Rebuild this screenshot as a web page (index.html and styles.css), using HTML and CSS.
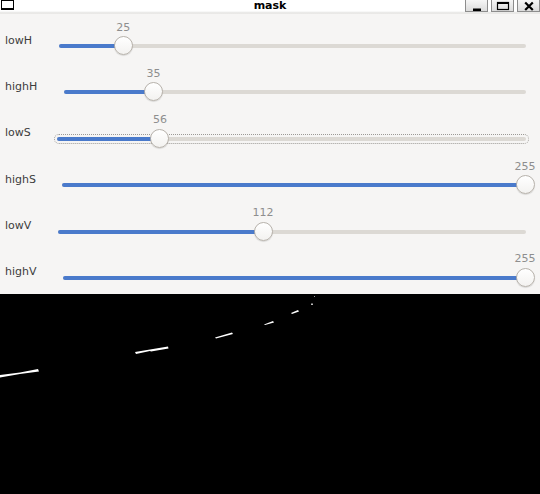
FILE: index.html
```html
<!DOCTYPE html>
<html lang="en">
<head>
  <meta charset="UTF-8">
  <title>mask</title>
  <link rel="stylesheet" href="styles.css">
</head>
<body>

<div class="window">
  <div class="titlebar">
    <span class="app-icon"></span>
    <span class="title">mask</span>
    <div class="controls">
      <span class="ctl-btn">
        <svg width="10" height="10" viewBox="0 0 10 10"><rect x="1" y="7.5" width="8" height="2.5" fill="#000"/></svg>
      </span>
      <span class="ctl-btn">
        <svg width="14" height="10" viewBox="0 0 14 10"><rect x="1.5" y="1.5" width="11" height="7" fill="none" stroke="#000" stroke-width="1.2"/><rect x="1" y="1" width="12" height="2" fill="#000"/></svg>
      </span>
      <span class="ctl-btn">
        <svg width="10" height="10" viewBox="0 0 10 10"><path d="M1.2 1.5 L8.8 9 M8.8 1.5 L1.2 9" stroke="#000" stroke-width="2.2" fill="none"/></svg>
      </span>
    </div>
  </div>

  <!-- trackbars: --f is value / max -->
  <div class="panel">
    <div class="row">
      <span class="name">lowH</span>
      <div class="scale" style="--f: 0.1389">
        <div class="value">25</div>
        <div class="slider"><div class="trough"><div class="fill"></div></div><div class="knob"></div></div>
      </div>
    </div>
    <div class="row">
      <span class="name">highH</span>
      <div class="scale" style="--f: 0.1944">
        <div class="value">35</div>
        <div class="slider"><div class="trough"><div class="fill"></div></div><div class="knob"></div></div>
      </div>
    </div>
    <div class="row">
      <span class="name">lowS</span>
      <div class="scale focused" style="--f: 0.2196">
        <div class="value">56</div>
        <div class="slider"><div class="trough"><div class="fill"></div></div><div class="knob"></div></div>
      </div>
    </div>
    <div class="row">
      <span class="name">highS</span>
      <div class="scale" style="--f: 1">
        <div class="value">255</div>
        <div class="slider"><div class="trough"><div class="fill"></div></div><div class="knob"></div></div>
      </div>
    </div>
    <div class="row">
      <span class="name">lowV</span>
      <div class="scale" style="--f: 0.4392">
        <div class="value">112</div>
        <div class="slider"><div class="trough"><div class="fill"></div></div><div class="knob"></div></div>
      </div>
    </div>
    <div class="row">
      <span class="name">highV</span>
      <div class="scale" style="--f: 1">
        <div class="value">255</div>
        <div class="slider"><div class="trough"><div class="fill"></div></div><div class="knob"></div></div>
      </div>
    </div>
  </div>

  <div class="mask">
    <svg width="540" height="200" viewBox="0 0 540 200">
      <rect width="540" height="200" fill="#000"/>
      <g fill="#fff">
        <polygon points="0,81 20,78.5 38,75 39,77.5 20,80 0,83.5"/>
        <polygon points="135,58 150,55.5 168,52.5 168.5,54.5 151,57.5 150,57 136,60"/>
        <polygon points="215,43.5 232,38.5 233,40 216,44.5"/>
        <polygon points="264,30.5 273,27 274,28.5 265,31"/>
        <polygon points="291,19 298,16 299,17.5 292,20"/>
        <rect x="311" y="9.5" width="2" height="1.5" fill="#bbb"/>
        <rect x="314" y="2" width="1" height="1" fill="#999"/>
      </g>
    </svg>
  </div>
</div>

</body>
</html>
```

FILE: styles.css
```css
body {
  margin: 0;
  font-family: "DejaVu Sans", Verdana, sans-serif;
  background-color: #000;
}

.window {
  width: 540px;
  height: 494px;
  overflow: hidden;
}

/* window title bar */
.titlebar {
  display: grid;
  grid-template-columns: 1fr auto 1fr;
  align-items: start;
  height: 14px;
  background: linear-gradient(#fff 0, #fff 11px, #e4e3e1 13px, #efeeec 14px);
}

.app-icon {
  width: 11px;
  height: 7px;
  margin-left: 1px;
  border: 1px solid #000;
  border-bottom-width: 2px;
  background-color: #fff;
}

.title {
  font-size: 11px;
  font-weight: bold;
  line-height: 11px;
  color: #000;
}

.controls {
  justify-self: end;
  display: flex;
  gap: 3px;
}

.ctl-btn {
  display: flex;
  align-items: center;
  justify-content: center;
  width: 21px;
  height: 11px;
  border: 1px solid #8d8d8d;
  border-top: none;
  background: linear-gradient(#f6f6f6, #dcdcdc);
}

/* trackbar panel */
.panel {
  box-sizing: border-box;
  height: 280px;
  padding-top: 1px;
  background-color: #f6f5f4;
}

.row {
  display: flex;
  align-items: flex-start;
  height: 46.4px;
}

.name {
  margin: 18.5px 0 0 5px;
  font-size: 11px;
  line-height: 13px;
  color: #3c3c3c;
}

.scale {
  position: relative;
  flex: 1;
  margin: 0 14px 0 26.5px;
  padding-top: 5.5px;
}

.value {
  position: relative;
  left: calc(var(--f) * (100% - 1px));
  width: 40px;
  margin-left: -20px;
  text-align: center;
  font-size: 11px;
  line-height: 13px;
  color: #8e8e8e;
}

.slider {
  position: relative;
  height: 20px;
  margin-top: 2.5px;
}

.trough {
  position: absolute;
  left: 0;
  right: 0;
  top: 8px;
  height: 4px;
  border-radius: 2px;
  background-color: #dcd9d4;
}

.focused .trough {
  outline: 1px dotted #9c9a96;
  outline-offset: 2px;
}

.fill {
  width: calc(var(--f) * (100% - 1px));
  height: 100%;
  border-radius: 2px;
  background-color: #4a7acb;
}

.knob {
  position: absolute;
  top: 0;
  left: calc(var(--f) * (100% - 1px));
  box-sizing: border-box;
  width: 19px;
  height: 19px;
  margin-left: -9.5px;
  border: 1px solid #b7b2ab;
  border-radius: 50%;
  background: linear-gradient(#fff, #f3f2f0);
  box-shadow: 0 1px 1px rgba(0, 0, 0, 0.12);
}

.mask {
  height: 200px;
}

.mask svg {
  display: block;
}
```
